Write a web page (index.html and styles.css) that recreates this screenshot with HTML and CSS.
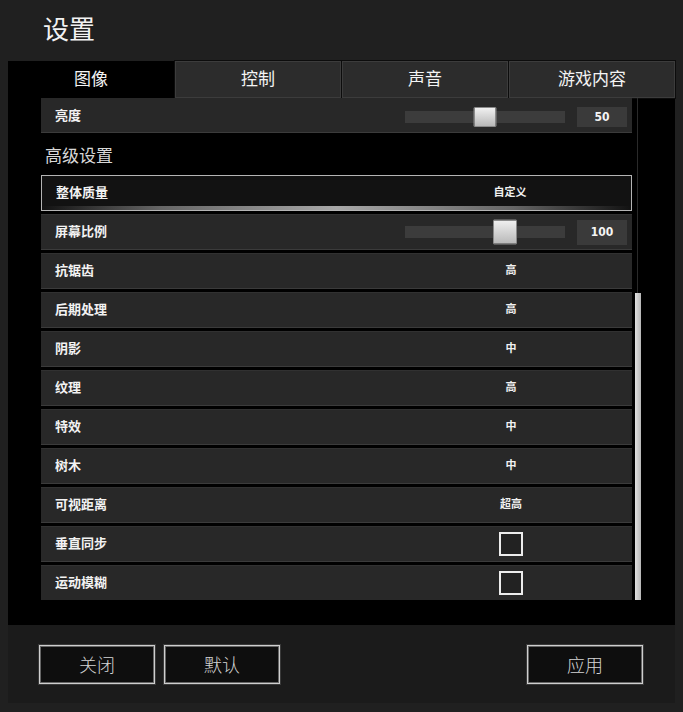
FILE: index.html
```html
<!DOCTYPE html>
<html lang="zh-CN">
<head>
<meta charset="utf-8">
<title>设置</title>
<link rel="stylesheet" href="styles.css">
</head>
<body>
<header class="header"><h1 class="title">设置</h1></header>
<main class="panel">
  <nav class="tabs">
    <div class="tab tab-active">图像</div>
    <div class="tab">控制</div>
    <div class="tab">声音</div>
    <div class="tab">游戏内容</div>
  </nav>
  <section class="content">
    <div class="viewport">
      <div class="list">
        <div class="row row-compact">
          <span class="label">亮度</span>
          <div class="track"><div class="thumb thumb-small" style="left:50%"></div></div>
          <div class="numbox numbox-small">50</div>
        </div>
        <div class="heading">高级设置</div>
        <div class="row row-selected">
          <span class="label">整体质量</span>
          <span class="value">自定义</span>
        </div>
        <div class="row">
          <span class="label">屏幕比例</span>
          <div class="track"><div class="thumb" style="left:62.3%"></div></div>
          <div class="numbox">100</div>
        </div>
        <div class="row"><span class="label">抗锯齿</span><span class="value">高</span></div>
        <div class="row"><span class="label">后期处理</span><span class="value">高</span></div>
        <div class="row"><span class="label">阴影</span><span class="value">中</span></div>
        <div class="row"><span class="label">纹理</span><span class="value">高</span></div>
        <div class="row"><span class="label">特效</span><span class="value">中</span></div>
        <div class="row"><span class="label">树木</span><span class="value">中</span></div>
        <div class="row"><span class="label">可视距离</span><span class="value">超高</span></div>
        <div class="row"><span class="label">垂直同步</span><span class="value"><span class="checkbox"></span></span></div>
        <div class="row"><span class="label">运动模糊</span><span class="value"><span class="checkbox"></span></span></div>
      </div>
    </div>
    <div class="scrollbar"><div class="scroll-thumb"></div></div>
  </section>
</main>
<footer class="footer">
  <button class="btn">关闭</button>
  <button class="btn">默认</button>
  <button class="btn btn-apply">应用</button>
</footer>
</body>
</html>
```

FILE: styles.css
```css
* { box-sizing: border-box; }
html, body { margin: 0; padding: 0; }
body {
  width: 683px;
  height: 712px;
  background: #202020;
  font-family: "Noto Sans CJK SC", "Noto Sans", sans-serif;
  color: #f0f0f0;
  overflow: hidden;
}
.header {
  height: 61px;
  padding: 14px 0 0 43px;
}
.title {
  margin: 0;
  font-size: 26px;
  line-height: 28px;
  font-weight: 400;
  color: #f2f2f2;
}
.panel {
  margin: 0 8px;
  height: 564px;
  background: #000;
  display: flex;
  flex-direction: column;
}
.tabs {
  height: 37px;
  display: grid;
  grid-template-columns: repeat(4, 1fr);
  gap: 1px;
}
.tab {
  display: flex;
  align-items: center;
  justify-content: center;
  padding-bottom: 4px;
  font-size: 17px;
  color: #f4f4f4;
  background: #2c2c2c;
  border: 1px solid #3c3c3c;
  box-shadow: 0 0 0 1px #0c0c0c;
}
.tab-active {
  background: #000;
  border-color: #000;
  box-shadow: none;
}
.content {
  display: flex;
  padding-left: 33px;
  height: 527px;
}
.viewport {
  width: 591px;
  height: 502px;
  overflow: hidden;
}
.list {
  display: flex;
  flex-direction: column;
}
.row {
  height: 36px;
  margin-bottom: 3px;
  display: flex;
  align-items: center;
  background: #282828;
  border-top: 1px solid #313131;
  border-bottom: 1px solid #3b3b3b;
  font-size: 13px;
  font-weight: 700;
}
.row-compact {
  height: 35px;
  margin-bottom: 0;
  border-top: none;
  padding-top: 3px;
}
.row-selected {
  background:
    linear-gradient(to right, rgba(170,170,170,0) 0%, rgba(170,170,170,0.55) 20%, #a8a8a8 50%, rgba(170,170,170,0.55) 80%, rgba(170,170,170,0) 100%) left bottom / 100% 4px no-repeat,
    #121212;
  border: 1px solid #b4b4b4;
}
.label {
  flex: 1;
  padding-left: 14px;
  line-height: 1;
  padding-bottom: 4px;
  color: #f2f2f2;
}
.value {
  width: 242px;
  display: flex;
  justify-content: center;
  align-items: center;
  line-height: 1;
  padding-bottom: 4px;
  font-size: 11px;
  color: #f0f0f0;
}
.value-box { padding-bottom: 0; }
.heading {
  height: 42px;
  display: flex;
  align-items: center;
  padding: 0 0 0 4px;
  font-size: 17px;
  color: #d8d8d8;
  font-weight: 400;
}
.track {
  position: relative;
  width: 160px;
  height: 12px;
  margin-right: 12px;
  background: #3c3c3c;
}
.thumb {
  position: absolute;
  top: 50%;
  width: 24px;
  height: 25px;
  transform: translate(-50%, -50%);
  background: linear-gradient(#f0f0f0, #b8b8b8);
  border: 1px solid #8a8a8a;
  border-radius: 1px;
}
.thumb-small {
  width: 23px;
  height: 20px;
}
.numbox {
  width: 50px;
  height: 25px;
  margin-right: 5px;
  background: #3a3a3a;
  display: flex;
  align-items: center;
  justify-content: center;
  font-family: "DejaVu Sans Condensed", "DejaVu Sans", sans-serif;
  font-size: 12px;
  font-weight: 700;
  color: #f4f4f4;
}
.numbox-small { height: 20px; }
.checkbox {
  display: block;
  width: 24px;
  height: 24px;
  margin-top: 4px;
  border: 2px solid #ececec;
  background: #222;
}
.scrollbar {
  width: 6px;
  height: 502px;
  margin-left: 3px;
  display: flex;
  flex-direction: column;
  justify-content: flex-end;
  background: linear-gradient(to right, transparent 2px, #2a2a2a 2px, #2a2a2a 3px, transparent 3px);
}
.scroll-thumb {
  height: 307px;
  background: linear-gradient(to right, #e0e0e0, #b8b8b8);
}
.footer {
  margin: 0 8px;
  height: 78px;
  background: #1b1b1b;
  display: flex;
  align-items: flex-start;
  padding: 20px 32px 0 31px;
  gap: 9px;
}
.btn {
  width: 116px;
  height: 39px;
  background: #0e0e0e;
  border: 1px solid #cfcfcf;
  box-shadow: inset 0 0 0 1px #666, 0 0 0 1px #3a3a3a;
  color: #d4d4d4;
  font-family: "Noto Sans CJK SC", "Noto Sans", sans-serif;
  font-size: 18px;
  font-weight: 300;
  padding: 0 0 2px;
}
.btn-apply { margin-left: auto; }
```
